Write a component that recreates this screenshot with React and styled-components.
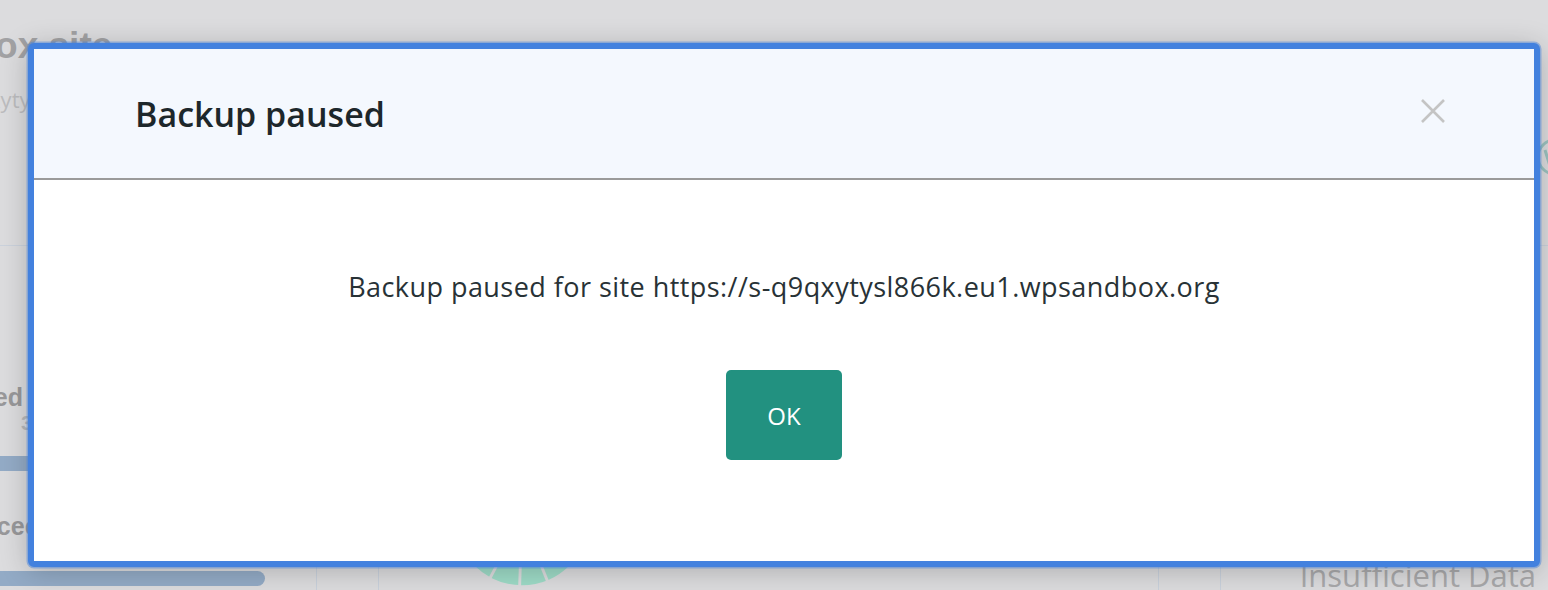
import React from 'react';
import styled, { createGlobalStyle } from 'styled-components';

const Global = createGlobalStyle`
  html, body { margin: 0; padding: 0; }
  body {
    background: #dcdcde;
    font-family: "Open Sans", "Liberation Sans", sans-serif;
    overflow: hidden;
  }
`;

const Page = styled.div`
  position: relative;
  width: 1548px;
  height: 590px;
  overflow: hidden;
  background: #dcdcde;
  display: flex;
  flex-direction: column;
`;

/* ---------- faded page behind the overlay ---------- */
const TopSection = styled.div`
  height: 246px;
  box-sizing: border-box;
  border-bottom: 1px solid #cbd2dc;
  display: flex;
  justify-content: space-between;
  align-items: flex-start;
  flex-shrink: 0;
`;

const TitleClip = styled.div`
  width: 112px;
  overflow: hidden;
  padding-top: 24px;
`;

const TitleBlock = styled.div`
  margin-left: -118px;
  display: flex;
  flex-direction: column;
  white-space: nowrap;
`;

const PageTitle = styled.div`
  font-family: "Liberation Sans", Arial, sans-serif;
  font-weight: 700;
  font-size: 37px;
  line-height: 44px;
  color: #a2a2a4;
`;

const PageSub = styled.div`
  font-family: "Open Sans", sans-serif;
  font-size: 22px;
  line-height: 30px;
  margin: 16px 0 0 -25px;
  color: #bcbcbe;
`;

const WpLogo = styled.svg`
  margin-top: 138px;
  margin-right: -26px;
  flex-shrink: 0;
`;

const StatsRow = styled.div`
  flex: 1;
  display: flex;
  min-height: 0;
`;

const Column = styled.div`
  width: ${(p) => p.$w}px;
  flex-shrink: 0;
  box-sizing: border-box;
  border-right: 1px solid #c9d1dc;
  display: flex;
  flex-direction: column;
`;

const LeftPanel = styled(Column)`
  padding-top: 136px;
`;

const StatLabel = styled.div`
  width: ${(p) => p.$w}px;
  overflow: hidden;
  direction: rtl;
  white-space: nowrap;
  font-family: "Liberation Sans", Arial, sans-serif;
  font-weight: 700;
  font-size: 25px;
  line-height: 30px;
  color: #98989a;
  margin-top: ${(p) => p.$mt || 0}px;
`;

const StatValue = styled.div`
  padding-left: 21px;
  font-family: "Liberation Sans", Arial, sans-serif;
  font-weight: 700;
  font-size: 21px;
  line-height: 22px;
  color: #b7b9bc;
`;

const Bar = styled.div`
  height: 15px;
  width: ${(p) => p.$w}px;
  border-radius: 0 8px 8px 0;
  background: #93abc6;
  margin-top: ${(p) => p.$mt}px;
`;

const MiddlePanel = styled(Column)`
  padding: 200px 0 0 68px;
`;

const RightPanel = styled.div`
  flex: 1;
  display: flex;
  flex-direction: column;
  justify-content: flex-end;
  align-items: flex-end;
  padding-right: 12px;
`;

const Insufficient = styled.div`
  font-family: "Open Sans", sans-serif;
  font-size: 31px;
  line-height: 40px;
  color: #a9a9ab;
  margin-bottom: -5px;
  white-space: nowrap;
`;

/* ---------- modal ---------- */
const Modal = styled.div`
  position: absolute;
  left: 28px;
  top: 43px;
  width: 1512px;
  height: 524px;
  box-sizing: border-box;
  border: 6px solid #4381de;
  border-radius: 6px;
  background: #ffffff;
  box-shadow: 0 0 0 1.5px rgba(67, 129, 222, 0.45), 0 4px 28px rgba(0, 0, 0, 0.22);
  display: flex;
  flex-direction: column;
  overflow: hidden;
`;

const ModalHeader = styled.div`
  height: 129px;
  flex-shrink: 0;
  background: #f4f8fe;
  border-bottom: 2px solid #9a9a9a;
  display: flex;
  align-items: center;
  justify-content: space-between;
  padding: 0 89px 0 101px;
`;

const ModalTitle = styled.h2`
  margin: 0;
  font-family: "Open Sans", sans-serif;
  font-weight: 600;
  font-size: 34px;
  color: #1d272b;
`;

const CloseButton = styled.button`
  border: 0;
  background: transparent;
  padding: 0;
  margin-bottom: 6px;
  width: 24px;
  height: 24px;
  display: flex;
  cursor: pointer;
`;

const ModalBody = styled.div`
  flex: 1;
  display: flex;
  flex-direction: column;
  align-items: center;
  padding-top: 89px;
`;

const Message = styled.p`
  margin: 0;
  font-family: "Open Sans", sans-serif;
  font-size: 27px;
  line-height: 36px;
  letter-spacing: 0.45px;
  color: #283236;
`;

const OkButton = styled.button`
  margin-top: 65px;
  width: 116px;
  height: 90px;
  border: 0;
  border-radius: 5px;
  background: #229180;
  color: #ffffff;
  font-family: "Open Sans", sans-serif;
  font-size: 24px;
  cursor: pointer;
`;

export default function App() {
  return (
    <>
      <Global />
      <Page>
        <TopSection>
          <TitleClip>
            <TitleBlock>
              <PageTitle>Sandbox site</PageTitle>
              <PageSub>https://s-q9qxytysl866k.eu1.wpsandbox.org</PageSub>
            </TitleBlock>
          </TitleClip>
          <WpLogo width="38" height="38" viewBox="0 0 38 38">
            <circle cx="19" cy="19" r="17" fill="none" stroke="#9cc2bf" strokeWidth="3" />
            <path d="M9 12 L14 28 L19 16 L24 28 L29 12" fill="none" stroke="#9cc2bf" strokeWidth="3" />
          </WpLogo>
        </TopSection>
        <StatsRow>
          <LeftPanel $w={317}>
            <StatLabel $w={23}>Backed</StatLabel>
            <StatValue>3</StatValue>
            <Bar $w={300} $mt={22} />
            <StatLabel $w={83} $mt={40}>Succeeded</StatLabel>
            <Bar $w={265} $mt={30} />
          </LeftPanel>
          <Column $w={62} />
          <MiddlePanel $w={780}>
            <svg width="150" height="150" viewBox="0 0 150 150">
              <circle cx="75" cy="75" r="60" fill="none" stroke="#9edbc7" strokeWidth="20" />
              {[25, 68, 92, 118, 155].map((a) => {
                const r1 = 48, r2 = 72, rad = (a * Math.PI) / 180;
                return (
                  <line
                    key={a}
                    x1={75 + r1 * Math.cos(rad)}
                    y1={75 + r1 * Math.sin(rad)}
                    x2={75 + r2 * Math.cos(rad)}
                    y2={75 + r2 * Math.sin(rad)}
                    stroke="#dcdcde"
                    strokeWidth="3"
                  />
                );
              })}
            </svg>
          </MiddlePanel>
          <Column $w={62} />
          <RightPanel>
            <Insufficient>Insufficient Data</Insufficient>
          </RightPanel>
        </StatsRow>

        <Modal role="dialog" aria-label="Backup paused">
          <ModalHeader>
            <ModalTitle>Backup paused</ModalTitle>
            <CloseButton aria-label="Close">
              <svg width="24" height="24" viewBox="0 0 24 24">
                <path d="M1 1 L23 23 M23 1 L1 23" stroke="#c4c4c4" strokeWidth="2.6" fill="none" />
              </svg>
            </CloseButton>
          </ModalHeader>
          <ModalBody>
            <Message>Backup paused for site https://s-q9qxytysl866k.eu1.wpsandbox.org</Message>
            <OkButton>OK</OkButton>
          </ModalBody>
        </Modal>
      </Page>
    </>
  );
}
